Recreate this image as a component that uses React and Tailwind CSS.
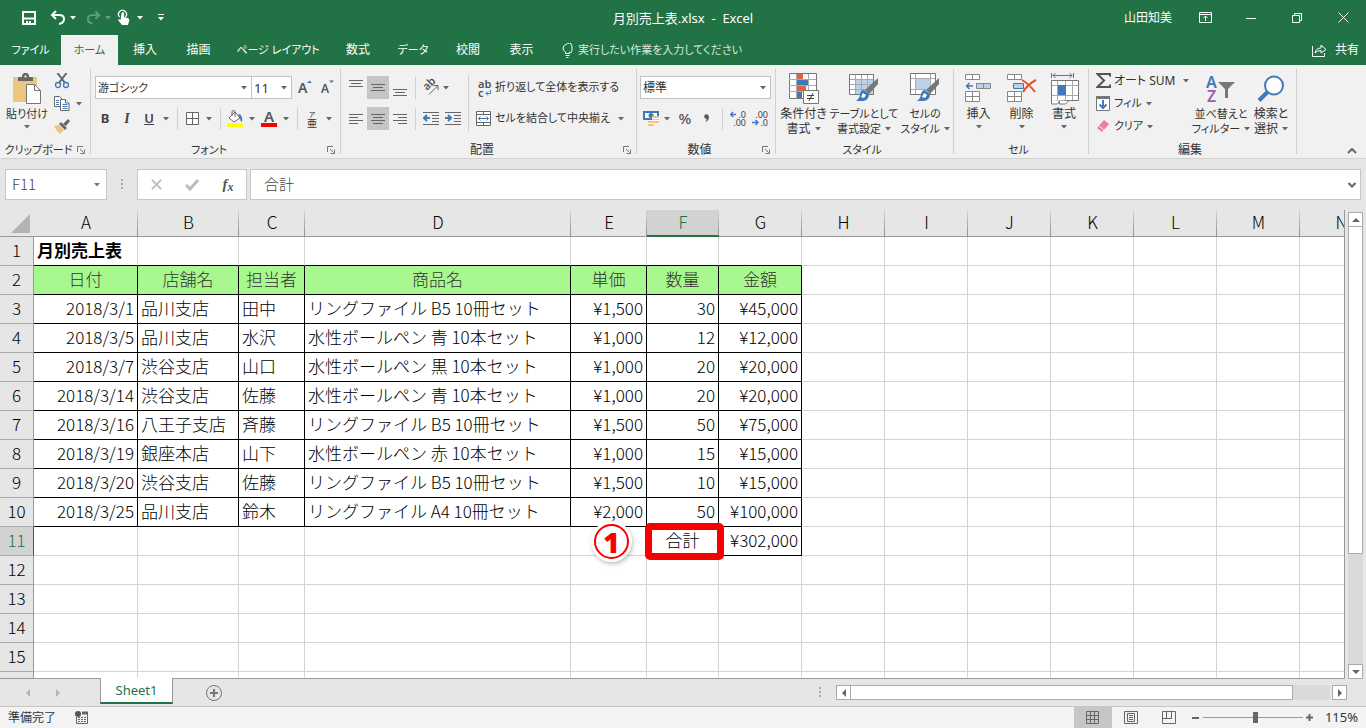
import React, { useState } from 'react';

const COLUMNS = [
  { name: 'A', width: 104 },
  { name: 'B', width: 101 },
  { name: 'C', width: 66 },
  { name: 'D', width: 266 },
  { name: 'E', width: 76 },
  { name: 'F', width: 72 },
  { name: 'G', width: 83 },
  { name: 'H', width: 83 },
  { name: 'I', width: 83 },
  { name: 'J', width: 83 },
  { name: 'K', width: 83 },
  { name: 'L', width: 83 },
  { name: 'M', width: 83 },
  { name: 'N', width: 83 },
];

const SHEET = {
  1: ['月別売上表'],
  2: ['日付', '店舗名', '担当者', '商品名', '単価', '数量', '金額'],
  3: ['2018/3/1', '品川支店', '田中', 'リングファイル B5 10冊セット', '¥1,500', '30', '¥45,000'],
  4: ['2018/3/5', '品川支店', '水沢', '水性ボールペン 青 10本セット', '¥1,000', '12', '¥12,000'],
  5: ['2018/3/7', '渋谷支店', '山口', '水性ボールペン 黒 10本セット', '¥1,000', '20', '¥20,000'],
  6: ['2018/3/14', '渋谷支店', '佐藤', '水性ボールペン 青 10本セット', '¥1,000', '20', '¥20,000'],
  7: ['2018/3/16', '八王子支店', '斉藤', 'リングファイル B5 10冊セット', '¥1,500', '50', '¥75,000'],
  8: ['2018/3/19', '銀座本店', '山下', '水性ボールペン 赤 10本セット', '¥1,000', '15', '¥15,000'],
  9: ['2018/3/20', '渋谷支店', '佐藤', 'リングファイル B5 10冊セット', '¥1,500', '10', '¥15,000'],
  10: ['2018/3/25', '品川支店', '鈴木', 'リングファイル A4 10冊セット', '¥2,000', '50', '¥100,000'],
  11: ['', '', '', '', '', '合計', '¥302,000'],
};

const ROWS = Array.from({ length: 16 }, (_, i) => i + 1);

const TABS = [
  { label: 'ファイル', className: 'w-[61px] text-[11px] text-white' },
  { label: 'ホーム', className: 'w-[57px] bg-[#f1f1f1] text-[11px] text-[#217346]' },
  { label: '挿入', className: 'w-[54px] text-white' },
  { label: '描画', className: 'w-[53px] text-white' },
  { label: 'ページ レイアウト', className: 'w-[106px] text-[11px] text-white' },
  { label: '数式', className: 'w-[54px] text-white' },
  { label: 'データ', className: 'w-[56px] text-[11px] text-white' },
  { label: '校閲', className: 'w-[54px] text-white' },
  { label: '表示', className: 'w-[53px] text-white' },
];

// --- Small shared pieces ---
const Caret = ({ className = 'text-[#666]' }) => (
  <svg width="6" height="4" viewBox="0 0 6 4" className={`shrink-0 ${className}`}>
    <path d="M0 0h6L3 3.5z" fill="currentColor" />
  </svg>
);

const Btn = ({ label, className = '', children }) => (
  <button aria-label={label} className={`flex h-[23px] shrink-0 items-center justify-center ${className}`}>
    {children}
  </button>
);

const CaretBtn = ({ label, className = 'w-[6px]' }) => (
  <Btn label={label} className={className}>
    <Caret />
  </Btn>
);

const Divider = ({ className = '' }) => <div className={`h-[22px] w-px shrink-0 bg-[#d0d0d0] ${className}`} />;

const Group = ({ title, launcher, titleClass = '', className, children }) => (
  <section className={`my-1 flex shrink-0 flex-col border-r border-[#d0d0d0] ${className}`}>
    <div className="flex flex-1">{children}</div>
    <div className="flex h-3 items-start pr-[5px]">
      <h2 className={`flex-1 text-center leading-4 whitespace-nowrap ${titleClass}`}>{title}</h2>
      {launcher && (
        <button aria-label={`${title}の設定`} className="mt-1">
          <svg width="8" height="8" viewBox="0 0 8 8" fill="none" stroke="#777" className="block">
            <path d="M.5 6V.5H6M3 3l3.5 3.5M7.5 3.5v4h-4" />
          </svg>
        </button>
      )}
    </div>
  </section>
);

const Dropdown = ({ label, value, className = '' }) => (
  <div className={`relative h-[23px] shrink-0 border border-[#c3c3c3] bg-white ${className}`}>
    <select aria-label={label} className="block h-full w-full appearance-none pl-[2px] leading-5 text-[#333] outline-none">
      <option>{value}</option>
    </select>
    <Caret className="pointer-events-none absolute top-[9px] right-[4px] text-[#666]" />
  </div>
);

const BigButton = ({ icon, lines, caretBelow, className = '' }) => (
  <button className={`flex shrink-0 flex-col items-center pt-[2px] leading-[15px] whitespace-nowrap ${className}`}>
    <span className="flex h-[35px] items-center">{icon}</span>
    {lines.map((line, i) => (
      <span key={line} className="flex items-center gap-1">
        {line}
        {!caretBelow && i === lines.length - 1 && <Caret />}
      </span>
    ))}
    {caretBelow && (
      <span className="flex h-3 items-center">
        <Caret />
      </span>
    )}
  </button>
);

const Lines = ({ bars, selected, label }) => (
  <Btn label={label} className={`w-[22px] ${selected ? 'bg-[#c5c5c5]' : ''}`}>
    <svg width="14" height="18" viewBox="0 0 14 18" stroke="#666">
      {bars.map(([x1, x2, y]) => (
        <path key={y} d={`M${x1} ${y}.5H${x2}`} />
      ))}
    </svg>
  </Btn>
);

// --- Icons ---
const PasteIcon = () => (
  <svg width="30" height="32" viewBox="0 0 30 32">
    <path d="M1 4h24v25H1z" fill="#ecc67c" />
    <path d="M6 8V4h4V2l2-2h3l2 2v2h4v4z" fill="#666" />
    <path d="M12.500 2.500h2v2h-2z" fill="#f1f1f1" />
    <path d="M14.500 11.500h8l6 6v13h-14z" fill="#fff" stroke="#777" />
    <path d="M22.500 11.500v6h6" fill="none" stroke="#777" />
  </svg>
);

const CutIcon = () => (
  <svg width="16" height="16" viewBox="0 0 16 16" fill="none">
    <path d="M3.500 0l7.500 10M12.500 0L5 10" stroke="#666" strokeWidth="2" />
    <circle cx="4" cy="12" r="2.500" stroke="#3e7ab8" strokeWidth="1.300" />
    <circle cx="12" cy="12" r="2.500" stroke="#3e7ab8" strokeWidth="1.300" />
  </svg>
);

const CopyIcon = () => (
  <svg width="16" height="15" viewBox="0 0 16 15" fill="#fff" stroke="#666">
    <path d="M.5.5h5l3 3v7h-8z" />
    <path d="M2 4.500h3M2 6.500h3M2 8.500h3" stroke="#3e7ab8" />
    <path d="M6.500 3.500h5l3.500 3.500v7.500H6.500z" />
    <path d="M11.500 3.500V7H15" />
    <path d="M8.500 8.500h5M8.500 10.500h5M8.500 12.500h5" stroke="#3e7ab8" />
  </svg>
);

const BrushIcon = () => (
  <svg width="17" height="15" viewBox="0 0 17 15">
    <path d="M0 7l5-1 5 5-4 4-3-3z" fill="#ecc67c" />
    <path d="M5 5l2-2 6 6-2 2z" fill="#666" />
    <path d="M9 5l5-5 2 2-4 5z" fill="#666" />
  </svg>
);

const FillColorIcon = () => (
  <svg width="16" height="18" viewBox="0 0 16 18">
    <path d="M2 8l6-6 5 6-6 4z" fill="#fff" stroke="#666" />
    <path d="M5 6V2q0-1.500 1.500-1.500T8 2v5" fill="none" stroke="#666" />
    <path d="M11 4q5 0 4 8-2-1-2-4z" fill="#3e7ab8" />
    <path d="M0 13h16v4H0z" fill="#ff0" />
  </svg>
);

const ConditionalIcon = () => (
  <svg width="31" height="31" viewBox="0 0 31 31">
    <path d="M1.500.5h27v25h-27z" fill="#fff" stroke="#777" />
    <path d="M1 6.500h27M1 12.500h27M1 18.500h27M8.500 1v24M20.500 1v24" stroke="#aaa" />
    <path d="M9 1h6v5H9zM9 13h9v5H9z" fill="#e0633f" />
    <path d="M9 7h11v5H9zM9 19h5v6H9z" fill="#3e7ab8" />
    <path d="M15.500 17.500h15v13h-15z" fill="#fff" stroke="#777" />
    <path d="M19 22.500h7M19 25.500h7M25 20l-4 8" stroke="#444" fill="none" />
  </svg>
);

const StyleBrush = () => (
  <>
    <path d="M29 5v6L20 21l-4-4z" fill="#777" />
    <path d="M15 17l5 4q0 6-6 7H7q4-3 4-7 1-4 4-4z" fill="#3e7ab8" />
    <path d="M14 20l3 2-2 3-3-1z" fill="#fff" />
  </>
);

const TableFormatIcon = () => (
  <svg width="30" height="31" viewBox="0 0 30 31">
    <path d="M.5 1.500h24v20H.5z" fill="#fff" stroke="#777" />
    <path d="M7 7h17v14H7z" fill="#bdd0e9" />
    <path d="M1 6.500h23M1 11.500h23M1 16.500h23M6.500 2v19M12.500 2v19M18.500 2v19" stroke="#aaa" />
    <StyleBrush />
  </svg>
);

const CellStyleIcon = () => (
  <svg width="30" height="31" viewBox="0 0 30 31">
    <path d="M.5.500h25v21H.5z" fill="#fff" stroke="#777" />
    <path d="M1 5.500h24M1 16.500h24M5.500 1v20M20.500 1v20" stroke="#aaa" />
    <path d="M6 6h14v10H6z" fill="#bdd0e9" />
    <StyleBrush />
  </svg>
);

const InsertCellsIcon = () => (
  <svg width="27" height="29" viewBox="0 0 27 29" fill="#fff" stroke="#888">
    <path d="M.5.500h14v5H.5zM7.500.500v5M.5 17.500h14v10H.5zM7.500 17.500v10M.5 22.500h14" />
    <path d="M11.500 9.500h14v5h-14zM18.500 9.500v5" fill="#bdd0e9" />
    <path d="M8 12H2M4.500 9L1.500 12l3 3" fill="none" stroke="#3e7ab8" strokeWidth="1.500" />
  </svg>
);

const DeleteCellsIcon = () => (
  <svg width="30" height="29" viewBox="0 0 30 29" fill="#fff" stroke="#888">
    <path d="M.5.500h14v5H.5zM7.500.500v5M.5 17.500h14v10H.5zM7.500 17.500v10M.5 22.500h14" />
    <path d="M6.500 9.500h10v5h-10z" fill="#bdd0e9" stroke="#3e7ab8" />
    <path d="M15 6q7 4 13 12M29 6q-8 4-13 12" fill="none" stroke="#e0532f" strokeWidth="2" />
  </svg>
);

const FormatCellsIcon = () => (
  <svg width="29" height="32" viewBox="0 0 29 32" fill="none">
    <path d="M1.500 0v5M23.500 0v5M3 2.500h19M5.500 0L3 2.500 5.500 5M19.500 0L22 2.500 19.500 5" stroke="#3e7ab8" />
    <path d="M1.500 7.500h27v20h-27z" fill="#fff" stroke="#777" />
    <path d="M2 12.500h26M2 22.500h26M7.500 8v19M15.500 8v5M15.500 22v5M22.500 8v19" stroke="#aaa" />
    <path d="M8 12h8v10H8z" fill="#3e7ab8" />
    <path d="M1.500 27v4h6l2-3v3h6l3-3" fill="#fff" stroke="#777" />
  </svg>
);

const SortFilterIcon = () => (
  <svg width="30" height="30" viewBox="0 0 30 30" className="overflow-visible font-['Noto_Sans',sans-serif]">
    <text x="0" y="14" fontSize="16" fontWeight="600" fill="#3e7ab8">A</text>
    <text x="1" y="28" fontSize="16" fontWeight="600" fill="#9a5fb5">Z</text>
    <path d="M12 8h17l-7 7v9h-3v-9z" fill="#777" />
  </svg>
);

const FindIcon = () => (
  <svg width="28" height="28" viewBox="0 0 28 28" fill="none" stroke="#3e7ab8">
    <circle cx="17" cy="10.500" r="9" fill="#fff" strokeWidth="2" />
    <path d="M10.500 17L2 25.500" strokeWidth="4" />
  </svg>
);

// --- Window header ---
const TitleBar = () => (
  <header className="flex h-[35px] shrink-0 items-center bg-[#217346] text-white">
    <div className="flex flex-1 items-center">
      <button aria-label="上書き保存" className="ml-[22px]">
        <svg width="14" height="14" viewBox="0 0 14 14" fill="none" stroke="#fff" strokeWidth="2">
          <path d="M1 1h12v12H1zM1 7.500h12" />
          <path d="M5 13v-3M8 10v3" />
        </svg>
      </button>
      <button aria-label="元に戻す" className="ml-[14px]">
        <svg width="16" height="15" viewBox="0 0 16 15" fill="none" stroke="#fff" strokeWidth="2">
          <path d="M6 1L2 5l4 4M2 5h7q5 0 5 4t-5 5" />
        </svg>
      </button>
      <CaretBtn label="元に戻す履歴" className="ml-1 w-[6px] [&>svg]:text-white" />
      <button aria-label="やり直し" className="ml-[10px] opacity-30">
        <svg width="15" height="15" viewBox="0 0 16 15" fill="none" stroke="#fff" strokeWidth="2">
          <path d="M10 1l4 4-4 4M14 5H7Q2 5 2 9t5 5" />
        </svg>
      </button>
      <CaretBtn label="やり直し履歴" className="ml-1 w-[6px] opacity-30 [&>svg]:text-white" />
      <button aria-label="タッチ/マウス モード" className="ml-[6px]">
        <svg width="13" height="17" viewBox="0 0 13 17">
          <path d="M2.500 8A4 4 0 1 1 8.500 8" fill="none" stroke="#fff" strokeWidth="1.300" />
          <path d="M4.500 4.500a1.300 1.300 0 0 1 2.600 0V8l4 1.200q1.400.500 1.200 2L11 16H5l-4-5q1-1.500 2.500 0z" fill="#fff" />
        </svg>
      </button>
      <CaretBtn label="モードの選択" className="ml-[7px] w-[6px] [&>svg]:text-white" />
      <button aria-label="クイック アクセス ツール バーのカスタマイズ" className="ml-[15px]">
        <svg width="6" height="7" viewBox="0 0 6 7" fill="#fff">
          <path d="M0 0h6v1H0zM0 3h6L3 6.500z" />
        </svg>
      </button>
    </div>
    <h1 className="text-[13px] leading-4 whitespace-pre">{'月別売上表.xlsx  -  Excel'}</h1>
    <div className="flex flex-1 items-center justify-end">
      <span className="mr-[10px]">山田知美</span>
      <button aria-label="リボンの表示オプション" className="flex w-[46px] justify-center">
        <svg width="13" height="11" viewBox="0 0 13 11" fill="none" stroke="#fff">
          <path d="M.5.500h12v10H.5zM1 2.500h11M6.500 9V4M4.500 6l2-2 2 2" />
        </svg>
      </button>
      <button aria-label="最小化" className="flex w-[46px] justify-center">
        <svg width="10" height="10" viewBox="0 0 10 10" stroke="#fff">
          <path d="M0 5.500h10" />
        </svg>
      </button>
      <button aria-label="元に戻す(縮小)" className="flex w-[46px] justify-center">
        <svg width="10" height="10" viewBox="0 0 10 10" fill="none" stroke="#fff">
          <path d="M.5 2.500h7v7h-7zM2.500 2.500v-2h7v7h-2" />
        </svg>
      </button>
      <button aria-label="閉じる" className="flex w-[46px] justify-center">
        <svg width="11" height="11" viewBox="0 0 11 11" stroke="#fff">
          <path d="M.5.500l10 10M10.500.500l-10 10" />
        </svg>
      </button>
    </div>
  </header>
);

const TabBar = () => (
  <nav className="flex h-[30px] shrink-0 items-stretch bg-[#217346]">
    {TABS.map((tab) => (
      <button key={tab.label} className={`shrink-0 whitespace-nowrap ${tab.className}`}>
        {tab.label}
      </button>
    ))}
    <button className="flex items-center gap-[5px] pl-[14px] text-[11px] whitespace-nowrap text-[#d9e8df]">
      <svg width="11" height="15" viewBox="0 0 11 15" fill="none" stroke="#fff">
        <path d="M3.500 10.500V9Q1 7.500 1 5t4.500-4.500T10 5 7.500 9v1.500zM3.500 12.500h4M4.500 14.500h2" />
      </svg>
      実行したい作業を入力してください
    </button>
    <button className="ml-auto flex items-center gap-2 pr-[7px] text-white">
      <svg width="15" height="14" viewBox="0 0 15 14" fill="none" stroke="#fff">
        <path d="M.5 3v10.500h12V10M3 10q1-5 6-5V2l5 4.500L9 10V7.500q-4 0-6 2.500z" />
      </svg>
      共有
    </button>
  </nav>
);

// --- Ribbon ---
const ClipboardGroup = () => (
  <Group title="クリップボード" launcher titleClass="text-[11px]" className="w-[91px]">
    <BigButton icon={<PasteIcon />} lines={['貼り付け']} caretBelow className="w-[54px] text-[11px]" />
    <div className="flex flex-col items-start">
      <Btn label="切り取り">
        <CutIcon />
      </Btn>
      <div className="flex items-center">
        <Btn label="コピー">
          <CopyIcon />
        </Btn>
        <CaretBtn label="コピーのオプション" className="ml-[6px] w-[6px]" />
      </div>
      <Btn label="書式のコピー">
        <BrushIcon />
      </Btn>
    </div>
  </Group>
);

const FontGroup = () => (
  <Group title="フォント" launcher titleClass="text-[11px]" className="w-[250px]">
    <div className="flex flex-col gap-2 pt-[7px]">
      <div className="flex items-center pl-1">
        <Dropdown label="フォント" value="游ゴシック" className="w-[157px] text-[11px]" />
        <Dropdown label="フォント サイズ" value="11" className="-ml-px w-[41px] text-[13px]" />
        <Btn label="フォント サイズの拡大" className="w-[26px]">
          <svg width="16" height="20" viewBox="0 0 16 20" className="font-['Noto_Sans',sans-serif]">
            <text x="1" y="15" fontSize="14" fontWeight="600" fill="#555">A</text>
            <path d="M10 5h5l-2.500-2.500z" fill="#3e7ab8" />
          </svg>
        </Btn>
        <Btn label="フォント サイズの縮小" className="w-[19px]">
          <svg width="14" height="20" viewBox="0 0 14 20" className="font-['Noto_Sans',sans-serif]">
            <text x="0" y="15" fontSize="12" fontWeight="600" fill="#555">A</text>
            <path d="M8 2.500h5L10.500 5z" fill="#3e7ab8" />
          </svg>
        </Btn>
      </div>
      <div className="flex items-center pl-[3px] font-['Noto_Sans',sans-serif] text-[13px] text-[#444]">
        <button className="h-[23px] w-[22px] font-bold">B</button>
        <button className="h-[23px] w-[22px] font-['Liberation_Serif',serif] text-[14px] font-bold italic">I</button>
        <button className="h-[23px] w-[22px] font-semibold underline">U</button>
        <CaretBtn label="下線の種類" className="w-3" />
        <Divider className="ml-[5px]" />
        <Btn label="罫線" className="w-7">
          <svg width="13" height="13" viewBox="0 0 13 13" fill="#fff" stroke="#666">
            <path d="M.5.500h12v12H.5zM6.500 0v13M0 6.500h13" />
          </svg>
        </Btn>
        <CaretBtn label="罫線の種類" />
        <Divider className="ml-2" />
        <Btn label="塗りつぶしの色" className="w-7">
          <FillColorIcon />
        </Btn>
        <CaretBtn label="塗りつぶしの色の選択" />
        <Btn label="フォントの色" className="w-7">
          <svg width="16" height="18" viewBox="0 0 16 18" className="overflow-visible">
            <text x="3" y="12" fontSize="15" fontWeight="600" fill="#555">A</text>
            <path d="M0 13h16v4H0z" fill="red" />
          </svg>
        </Btn>
        <CaretBtn label="フォントの色の選択" />
        <Divider className="ml-2" />
        <Btn label="ふりがなの表示/非表示" className="w-7 flex-col font-['Noto_Sans_CJK_JP',sans-serif] text-[#333]">
          <span className="text-[7px] leading-[8px]">ア</span>
          <span className="text-[10px] leading-[10px]">亜</span>
        </Btn>
        <CaretBtn label="ふりがなのオプション" />
      </div>
    </div>
  </Group>
);

const AlignmentGroup = () => (
  <Group title="配置" launcher className="w-[296px]">
    <div className="flex flex-col gap-2 pt-[7px] pl-1">
      <div className="flex items-center">
        <Lines label="上揃え" bars={[[0, 14, 1], [2, 12, 4], [0, 14, 7]]} />
        <Lines label="上下中央揃え" selected bars={[[0, 14, 5], [2, 12, 8], [0, 14, 11]]} />
        <Lines label="下揃え" bars={[[0, 14, 10], [2, 12, 13], [0, 14, 16]]} />
        <Divider className="ml-1" />
        <Btn label="方向" className="ml-[6px]">
          <svg width="18" height="17" viewBox="0 0 18 17" className="overflow-visible font-['Noto_Sans',sans-serif]">
            <text transform="translate(5 12) rotate(-45)" fontSize="11" fontWeight="600" fill="#555">ab</text>
            <path d="M7 15.500L15.500 7M11.500 6.500h4.500V11" fill="none" stroke="#666" />
          </svg>
        </Btn>
        <CaretBtn label="方向の選択" className="ml-[3px] w-[6px]" />
      </div>
      <div className="flex items-center">
        <Lines label="左揃え" bars={[[0, 14, 4], [0, 9, 7], [0, 14, 10], [0, 9, 13]]} />
        <Lines label="中央揃え" selected bars={[[0, 14, 4], [2, 12, 7], [0, 14, 10], [2, 12, 13]]} />
        <Lines label="右揃え" bars={[[0, 14, 4], [5, 14, 7], [0, 14, 10], [5, 14, 13]]} />
        <Divider className="ml-1" />
        <Btn label="インデントを減らす" className="ml-[7px]">
          <svg width="16" height="13" viewBox="0 0 16 13" fill="none" stroke="#666">
            <path d="M0 .5h16M9 3.500h7M9 6.500h7M9 9.500h7M0 12.500h16" />
            <path d="M7 6H1.500M4 3L1 6l3 3" stroke="#3e7ab8" strokeWidth="2" />
          </svg>
        </Btn>
        <Btn label="インデントを増やす" className="ml-[6px]">
          <svg width="16" height="13" viewBox="0 0 16 13" fill="none" stroke="#666">
            <path d="M0 .5h16M9 3.500h7M9 6.500h7M9 9.500h7M0 12.500h16" />
            <path d="M0 6h5.500M3 3l3 3-3 3" stroke="#3e7ab8" strokeWidth="2" />
          </svg>
        </Btn>
      </div>
    </div>
    <div className="mt-[6px] ml-[7px] h-[56px] w-px bg-[#d0d0d0]" />
    <div className="flex flex-col gap-2 pt-[7px] pl-[7px] text-[11px]">
      <button className="flex h-[23px] items-center gap-[3px] whitespace-nowrap">
        <span className="relative flex h-[18px] w-4 flex-col items-start pl-[2px] font-['Noto_Sans',sans-serif] text-[11px] leading-[9px] font-semibold text-[#555]">
          <span>ab</span>
          <span>c</span>
          <svg width="6" height="7" viewBox="0 0 6 7" fill="none" stroke="#3e7ab8" className="absolute right-[1px] bottom-0">
            <path d="M5.500 0v3.500H1M3 1.500l-2 2 2 2" />
          </svg>
        </span>
        折り返して全体を表示する
      </button>
      <div className="flex items-center">
        <button className="flex h-[23px] items-center gap-[3px] whitespace-nowrap">
          <svg width="16" height="15" viewBox="0 0 16 15" fill="#fff" stroke="#666">
            <path d="M.5.500h14v14H.5zM7.500.500v3M7.500 11.500v3M.5 3.500h14M.5 11.500h14" />
            <path d="M2.500 7.500h10M4.500 5.500l-2 2 2 2M10.500 5.500l2 2-2 2" fill="none" stroke="#3e7ab8" />
          </svg>
          セルを結合して中央揃え
        </button>
        <CaretBtn label="セルの結合オプション" className="ml-2 w-[6px]" />
      </div>
    </div>
  </Group>
);

const NumberGroup = () => (
  <Group title="数値" launcher className="w-[139px]">
    <div className="flex flex-1 flex-col gap-2 pt-[7px] pr-1 pl-[3px]">
      <Dropdown label="表示形式" value="標準" className="w-full" />
      <div className="flex items-center text-[#555]">
        <Btn label="通貨表示形式" className="ml-[3px]">
          <svg width="17" height="17" viewBox="0 0 17 17">
            <path d="M1 2h14v7H1z" fill="#fff" stroke="#3e7ab8" strokeWidth="2" />
            <circle cx="8" cy="5.500" r="2.500" fill="#3e7ab8" />
            <path d="M9 6h7v7H9zM5 11h6v5H5z" fill="#ecc67c" />
            <path d="M9 8.500h7M9 10.500h7M5 13.500h6" stroke="#fff" />
          </svg>
        </Btn>
        <CaretBtn label="通貨の選択" className="ml-1 w-[6px]" />
        <button className="ml-1 h-[23px] w-[22px] font-['Noto_Sans',sans-serif] text-[15px] font-medium">%</button>
        <Btn label="桁区切りスタイル" className="w-5">
          <svg width="5" height="9" viewBox="0 0 5 9">
            <circle cx="2.500" cy="2.500" r="2.300" fill="#555" />
            <path d="M4.800 2.500Q5 7 1 8.500q2-2 1.500-4z" fill="#555" />
          </svg>
        </Btn>
        <Divider className="ml-[6px]" />
        <Btn label="小数点以下の表示桁数を増やす" className="relative ml-[7px] w-4 flex-col font-['Noto_Sans',sans-serif] text-[9px] leading-[8px] text-[#444]">
          <span className="self-end">.0</span>
          <span className="self-end">.00</span>
          <svg width="7" height="7" viewBox="0 0 7 7" className="absolute top-1 left-0" fill="none" stroke="#3e7ab8">
            <path d="M6 3.500H1M3 1L.700 3.500 3 6" strokeWidth="1.500" />
          </svg>
        </Btn>
        <Btn label="小数点以下の表示桁数を減らす" className="relative ml-[6px] w-4 flex-col font-['Noto_Sans',sans-serif] text-[9px] leading-[8px] text-[#444]">
          <span className="self-end">.00</span>
          <span className="self-end">.0</span>
          <svg width="7" height="7" viewBox="0 0 7 7" className="absolute bottom-1 left-0" fill="none" stroke="#3e7ab8">
            <path d="M0 3.500h5M3.500 1L6 3.500 3.500 6" strokeWidth="1.500" />
          </svg>
        </Btn>
      </div>
    </div>
  </Group>
);

const EditingGroup = () => (
  <Group title="編集" className="w-[208px]">
    <div className="flex w-[101px] flex-col items-start pl-[7px] whitespace-nowrap">
      <button className="flex h-[23px] items-center gap-[3px]">
        <svg width="15" height="15" viewBox="0 0 15 15" fill="none" stroke="#555" strokeWidth="2">
          <path d="M14 3.500V1H1.500L8 7.500 1.500 14H14v-2.500" />
        </svg>
        オート SUM
        <span className="ml-[5px]">
          <Caret />
        </span>
      </button>
      <button className="flex h-[23px] items-center gap-1 text-[11px]">
        <svg width="14" height="15" viewBox="0 0 14 15">
          <path d="M.5.500h13v14H.5z" fill="#fff" stroke="#777" />
          <path d="M0 0h14v3H0z" fill="#777" />
          <path d="M7 4v8M3.500 8.500L7 12l3.500-3.500" fill="none" stroke="#3e7ab8" strokeWidth="2" />
        </svg>
        フィル
        <Caret />
      </button>
      <button className="flex h-[23px] items-center gap-1 text-[11px]">
        <svg width="14" height="13" viewBox="0 0 14 13">
          <path d="M1 8l7-8 5 4-7 8z" fill="#e8819a" />
          <path d="M3 6l5 4" stroke="#f1f1f1" />
        </svg>
        クリア
        <Caret />
      </button>
    </div>
    <BigButton icon={<SortFilterIcon />} lines={['並べ替えと', 'フィルター']} className="w-[62px] text-[11px]" />
    <BigButton icon={<FindIcon />} lines={['検索と', '選択']} className="w-[38px]" />
  </Group>
);

const Ribbon = () => (
  <div className="flex h-[94px] shrink-0 border-b border-[#d2d2d2] bg-[#f1f1f1]">
    <ClipboardGroup />
    <FontGroup />
    <AlignmentGroup />
    <NumberGroup />
    <Group title="スタイル" titleClass="text-[11px]" className="w-[178px]">
      <BigButton icon={<ConditionalIcon />} lines={['条件付き', '書式']} className="w-[55px]" />
      <BigButton icon={<TableFormatIcon />} lines={['テーブルとして', '書式設定']} className="w-[66px] text-[11px]" />
      <BigButton icon={<CellStyleIcon />} lines={['セルの', 'スタイル']} className="w-[56px] text-[11px]" />
    </Group>
    <Group title="セル" titleClass="text-[11px]" className="w-[135px]">
      <BigButton icon={<InsertCellsIcon />} lines={['挿入']} caretBelow className="ml-[3px] w-[43px]" />
      <BigButton icon={<DeleteCellsIcon />} lines={['削除']} caretBelow className="w-[43px]" />
      <BigButton icon={<FormatCellsIcon />} lines={['書式']} caretBelow className="w-[42px]" />
    </Group>
    <EditingGroup />
    <button aria-label="リボンを折りたたむ" className="mt-auto mr-[9px] mb-[4px] ml-auto">
      <svg width="10" height="6" viewBox="0 0 10 6" fill="none" stroke="#666" strokeWidth="2">
        <path d="M1 5l4-4 4 4" />
      </svg>
    </button>
  </div>
);

const Dots = () => (
  <svg width="3" height="11" viewBox="0 0 3 11" fill="#aaa">
    <path d="M0 0h2v2H0zM0 4h2v2H0zM0 8h2v2H0z" />
  </svg>
);

const FormulaBar = ({ value, onChange }) => (
  <div className="flex h-[51px] shrink-0 items-center px-[5px] font-['Noto_Sans_CJK_JP',sans-serif] text-[15px] font-light text-[#444]">
    <div className="flex h-[31px] w-[102px] items-center border border-[#c6c6c6] bg-white px-[6px]">
      <input aria-label="名前ボックス" defaultValue="F11" className="w-full min-w-0 outline-none" />
      <Caret className="text-[#777]" />
    </div>
    <div className="flex w-[30px] justify-center">
      <Dots />
    </div>
    <div className="flex h-[31px] w-[110px] items-center border border-[#c6c6c6] bg-white">
      <Btn label="キャンセル" className="w-9">
        <svg width="11" height="11" viewBox="0 0 12 12" stroke="#bbb" strokeWidth="2">
          <path d="M1 1l10 10M11 1L1 11" />
        </svg>
      </Btn>
      <Btn label="入力" className="w-9">
        <svg width="14" height="12" viewBox="0 0 14 12" fill="none" stroke="#bbb" strokeWidth="3">
          <path d="M1 6l4 4 8-9" />
        </svg>
      </Btn>
      <Btn label="関数の挿入" className="w-9 font-['Liberation_Serif',serif] text-[15px] font-bold text-[#555] italic">
        f<span className="mt-1 text-[12px]">x</span>
      </Btn>
    </div>
    <div className="ml-[3px] flex h-[31px] flex-1 items-center border border-[#c6c6c6] bg-white pr-1 pl-[13px]">
      <input
        aria-label="数式バー"
        value={value}
        onChange={(e) => onChange(e.target.value)}
        className="min-w-0 flex-1 outline-none"
      />
      <svg width="8" height="6" viewBox="0 0 8 6" fill="none" stroke="#666" strokeWidth="2">
        <path d="M.500 1L4 4.500 7.500 1" />
      </svg>
    </div>
  </div>
);

// --- Sheet ---
const Annotation = () => (
  <>
    <div className="pointer-events-none absolute top-[-4px] left-[-2px] z-10 h-[37px] w-[79px] rounded-[5px] border-[7px] border-[#f90000]" />
    <div className="pointer-events-none absolute top-[-6px] left-[-56px] z-10 flex h-[41px] w-[41px] items-center justify-center rounded-full bg-white shadow-[1px_2px_4px_#8888]">
      <div className="flex h-[35px] w-[35px] items-center justify-center rounded-full border-2 border-[#f90000] bg-white font-['Open_Sans',sans-serif] text-[28px] leading-7 font-extrabold text-[#f90000]">
        1
      </div>
    </div>
  </>
);

const cellClass = (row, col) => {
  const classes = [];
  const inTable = row >= 2 && row <= 10 && col <= 6;
  const total = row === 11 && (col === 5 || col === 6);

  classes.push(inTable || total ? 'border-r-black' : 'border-r-[#d4d4d4]');
  classes.push(inTable || total || (row === 1 && col <= 6) ? 'border-b-black' : 'border-b-[#d4d4d4]');

  if (row === 2 && col <= 6) classes.push('bg-[#a9f88f] text-center text-[#333]');
  else if (row === 1) classes.push('font-bold');
  else if (row === 11 && col === 5) classes.push('relative text-center');
  else if (col === 0 || col > 3) classes.push('text-right');
  return classes.join(' ');
};

const Grid = ({ total }) => (
  <div className="min-w-0 flex-1 overflow-hidden border-r border-b border-[#999] bg-white">
    <table className="w-[1383px] table-fixed border-separate border-spacing-0 font-['Noto_Sans_CJK_JP',sans-serif] text-[17px] leading-[26px] font-light whitespace-nowrap text-black">
      <colgroup>
        <col className="w-[34px]" />
        {COLUMNS.map((c) => (
          <col key={c.name} style={{ width: c.width }} />
        ))}
      </colgroup>
      <thead>
        <tr className="h-[27px] leading-6">
          <th aria-label="すべて選択" className="border-b border-[#999] bg-[#e6e6e6] p-0 pr-1">
            <svg width="19" height="19" viewBox="0 0 19 19" className="ml-auto">
              <path d="M19 0v19H0z" fill="#b3b3b3" />
            </svg>
          </th>
          {COLUMNS.map((c) => (
            <th
              key={c.name}
              className={`border-b bg-[linear-gradient(#d4d4d4,#8f8f8f)] bg-[length:1px_100%] bg-right bg-no-repeat p-0 align-top font-light ${
                c.name === 'F'
                  ? 'border-b-[#217346] bg-[#d2d2d2] text-[#217346] shadow-[inset_0_-1px_#217346]'
                  : 'border-b-[#999] bg-[#e6e6e6]'
              }`}
            >
              {c.name}
            </th>
          ))}
        </tr>
      </thead>
      <tbody>
        {ROWS.map((row) => (
          <tr key={row} className="h-[29px]">
            <th
              className={`border-r border-b border-b-[#ababab] p-0 align-top font-light ${
                row === 11 ? 'border-r-[#217346] bg-[#d2d2d2] text-[#217346]' : 'border-r-[#999] bg-[#e6e6e6]'
              }`}
            >
              {row}
            </th>
            {COLUMNS.map((c, col) => {
              const isTotal = row === 11 && col === 5;
              return (
                <td key={c.name} className={`border-r border-b px-[3px] py-0 align-top ${cellClass(row, col)}`}>
                  {isTotal ? total : SHEET[row]?.[col]}
                  {isTotal && <Annotation />}
                </td>
              );
            })}
          </tr>
        ))}
      </tbody>
    </table>
  </div>
);

const Arrow = ({ d }) => (
  <svg width="8" height="8" viewBox="0 0 8 8" fill="#666">
    <path d={d} />
  </svg>
);

const ScrollBtn = ({ label, d }) => (
  <button aria-label={label} className="flex h-[15px] w-[15px] shrink-0 items-center justify-center border border-[#ababab] bg-white">
    <Arrow d={d} />
  </button>
);

const SheetBar = () => (
  <div className="flex h-[27px] shrink-0 items-center pr-[19px]">
    <button aria-label="前のシート" className="ml-6 opacity-40">
      <Arrow d="M6 0v8L2 4z" />
    </button>
    <button aria-label="次のシート" className="ml-[22px] opacity-40">
      <Arrow d="M2 0v8l4-4z" />
    </button>
    <button className="relative -mt-px ml-[38px] h-[26px] w-[73px] self-start border-x border-b-2 border-x-[#999] border-b-[#217346] bg-white pt-[2px] text-[13px] text-[#217346]">
      Sheet1
    </button>
    <button aria-label="新しいシート" className="ml-[33px]">
      <svg width="16" height="16" viewBox="0 0 16 16" fill="none" stroke="#777">
        <circle cx="8" cy="8" r="7.500" />
        <path d="M4 8h8M8 4v8" strokeWidth="2" />
      </svg>
    </button>
    <div className="ml-auto">
      <Dots />
    </div>
    <div className="ml-[14px] flex w-[511px] items-center">
      <ScrollBtn label="左へスクロール" d="M6 0v8L2 4z" />
      <div className="flex flex-1 bg-[#dadada]">
        <div className="-ml-px h-[15px] w-[443px] border border-[#ababab] bg-white" />
      </div>
      <div className="w-[2px]" />
      <ScrollBtn label="右へスクロール" d="M2 0v8l4-4z" />
    </div>
  </div>
);

const StatusBar = () => (
  <footer className="flex h-[22px] shrink-0 items-center border-t border-[#c6c6c6] bg-[#f3f3f3] pl-2">
    <span>準備完了</span>
    <button aria-label="マクロの記録" className="ml-[19px]">
      <svg width="14" height="13" viewBox="0 0 14 13" fill="none" stroke="#666">
        <path d="M3 6.500h8M3 8.500h8M3 10.500h8" strokeDasharray="2 1" />
        <path d="M1.500 6v6.500h11v-11H7" />
        <path d="M7 2h6" strokeWidth="3" />
        <circle cx="3" cy="3" r="3" fill="#555" stroke="none" />
      </svg>
    </button>
    <div className="ml-auto flex h-full items-center">
      <button aria-label="標準" className="flex h-full w-[38px] items-center justify-center bg-[#c6c6c6]">
        <svg width="13" height="13" viewBox="0 0 13 13" fill="none" stroke="#666">
          <path d="M.5.500h12v12H.5zM4.500 0v13M8.500 0v13M0 4.500h13M0 8.500h13" />
        </svg>
      </button>
      <button aria-label="ページ レイアウト" className="flex w-[38px] justify-center">
        <svg width="14" height="13" viewBox="0 0 14 13" fill="none" stroke="#666">
          <path d="M.5.500h13v12H.5zM3.500 2.500h7v8h-7zM5 4.500h4M5 6.500h4M5 8.500h4" />
        </svg>
      </button>
      <button aria-label="改ページ プレビュー" className="flex w-[38px] justify-center">
        <svg width="14" height="13" viewBox="0 0 14 13" fill="none" stroke="#666">
          <path d="M.5.500h13v12H.5zM4.500 0v7M9.500 0v7M0 7.500h10" />
        </svg>
      </button>
      <button aria-label="縮小" className="ml-1 h-[2px] w-[7px] bg-[#666]" />
      <input
        type="range"
        aria-label="ズーム"
        min="0"
        max="100"
        defaultValue="53"
        className="ml-1 h-3 w-[100px] appearance-none bg-[linear-gradient(#999,#999)] bg-[length:100%_1px] bg-center bg-no-repeat [&::-webkit-slider-thumb]:h-[11px] [&::-webkit-slider-thumb]:w-[5px] [&::-webkit-slider-thumb]:appearance-none [&::-webkit-slider-thumb]:bg-[#666]"
      />
      <button aria-label="拡大" className="ml-[3px]">
        <svg width="7" height="7" viewBox="0 0 7 7" stroke="#666" strokeWidth="2">
          <path d="M0 3.500h7M3.500 0v7" />
        </svg>
      </button>
      <span className="mr-2 ml-3 text-[13px]">115%</span>
    </div>
  </footer>
);

function App() {
  const [total, setTotal] = useState('合計');

  return (
    <div className="flex h-screen flex-col overflow-hidden bg-[#e6e6e6] font-['Noto_Sans','Noto_Sans_CJK_JP',sans-serif] text-[12px] text-[#333] [font-feature-settings:'palt']">
      <TitleBar />
      <TabBar />
      <Ribbon />
      <FormulaBar value={total} onChange={setTotal} />
      <main className="flex min-h-0 flex-1 [font-feature-settings:normal]">
        <Grid total={total} />
        <div className="flex w-[21px] shrink-0 flex-col items-center pt-[2px]">
          <ScrollBtn label="上へスクロール" d="M0 6h8L4 2z" />
          <div className="w-[15px] flex-1 bg-[#dadada]">
            <div className="-mt-px h-[75%] border border-[#ababab] bg-white" />
          </div>
          <ScrollBtn label="下へスクロール" d="M0 2h8L4 6z" />
        </div>
      </main>
      <SheetBar />
      <StatusBar />
    </div>
  );
}

export default App;
